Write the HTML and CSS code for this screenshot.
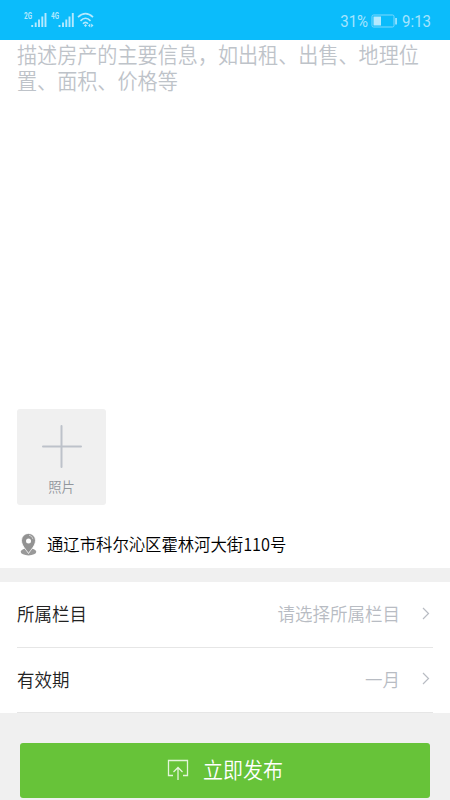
FILE: index.html
```
<!DOCTYPE html>
<html lang="zh-CN">
<head>
<meta charset="utf-8">
<title>发布</title>
<link rel="stylesheet" href="styles.css">
</head>
<body>
<header class="status">
  <svg class="signals" width="80" height="20" viewBox="0 0 80 20">
    <g class="net"><text x="0" y="10" textLength="8" lengthAdjust="spacingAndGlyphs">2G</text><text x="27" y="10" textLength="8" lengthAdjust="spacingAndGlyphs">4G</text></g>
    <path class="bars" d="M8.200 16v2M11.700 13.500v4.500M15 10.500v7.500M18.300 7.500v10.500M21.500 4v14M35.500 16v2M39 13.500v4.500M42.300 10.500v7.500M45.500 7.500v10.500M48.800 4v14"/>
    <path class="wifi" d="M54 8.200Q61.500 1.200 69 8.200M56.500 11.800Q61.500 6.700 66.500 11.800M59 14.800Q61.500 12 64 14.800"/>
    <path class="wifi-dots" d="M60 16.500l1.500-1.500 1.500 1.500-1.500 1.500zM64 16.500l2.300-2v4zM69.500 16.500l-2.300-2v4z"/>
  </svg>
  <div class="status-right">
    <span class="status-text">31%</span>
    <svg class="battery" width="27" height="14" viewBox="0 0 27 14">
      <rect class="battery-shell" x="1" y="1" width="22" height="12" rx="1.500"/>
      <path class="battery-fill" d="M2.500 2.500h7.500v9h-7.500zM24.300 4h1.500v6.500h-1.500z"/>
    </svg>
    <span class="status-text">9:13</span>
  </div>
</header>
<main>
  <section class="editor">
    <div class="placeholder"><div class="tall">描述房产的主要信息，如出租、出售、地理位</div><div class="tall">置、面积、价格等</div></div>
    <div class="photo">
      <svg width="40" height="43" viewBox="0 0 40 43"><path d="M19.500 1v41M1 21.500h38"/></svg>
      <span class="tall">照片</span>
    </div>
    <div class="location">
      <svg width="17" height="23" viewBox="0 0 17 23">
        <ellipse class="pin-base" cx="8.500" cy="18.800" rx="7.800" ry="3.600"/>
        <path class="pin-halo" d="M8.500 20.500C6 16.500 1.500 12.500 1.500 7.400a7 7 0 0 1 14 0c0 5.100-4.500 9.100-7 13.100z"/>
        <path class="pin-shine" d="M9 2.200q3.400.6 4 4"/>
        <circle class="pin-hole" cx="8.500" cy="8" r="2.500"/>
      </svg>
      <span class="tall">通辽市科尔沁区霍林河大街110号</span>
    </div>
  </section>
  <section class="options">
    <div class="row"><span class="tall">所属栏目</span><span class="value tall">请选择所属栏目</span><svg class="chevron" width="8" height="13" viewBox="0 0 8 13"><path d="M1 1l5.500 5.500L1 12"/></svg></div>
    <div class="row"><span class="tall">有效期</span><span class="value tall">一月</span><svg class="chevron" width="8" height="13" viewBox="0 0 8 13"><path d="M1 1l5.500 5.500L1 12"/></svg></div>
  </section>
  <div class="submit">
    <svg width="22" height="22" viewBox="0 0 22 22"><path d="M6 16.500H1.500V1.500h19v15H16M11 21V9M6.500 13L11 8.500l4.500 4.500"/></svg>
    <span class="tall">立即发布</span>
  </div>
</main>
</body>
</html>
```
FILE: styles.css
```
* { box-sizing: border-box; }
body {
  margin: 0;
  height: 800px;
  overflow: hidden;
  background: #f0f0f0;
  font-family: "Noto Sans CJK SC", sans-serif;
  font-weight: 350;
}
svg { display: block; flex: none; fill: none; }
.status {
  height: 40px;
  padding: 0 19px 0 24px;
  display: flex;
  justify-content: space-between;
  background: #0bbcfb;
  color: #a5e4fe;
}
.signals { margin-top: 9px; }
.net { fill: #b5e9fe; font: bold 9.500px Roboto, sans-serif; }
.bars { stroke: #b5e9fe; stroke-width: 1.900; }
.wifi { stroke: #b5e9fe; stroke-width: 1.700; }
.wifi-dots { fill: #b5e9fe; }
.status-right { display: flex; align-items: center; height: 41px; }
.status-text {
  font: 15px/20px Roboto, sans-serif;
  transform: scaleY(1.1);
}
.battery { margin: 0 4px 0 3px; }
.battery-shell { stroke: #7ed8fc; stroke-width: 1; }
.battery-fill { fill: #b5e9fe; }
.tall { white-space: nowrap; transform: scaleY(1.06); }
.editor { height: 528px; padding: 0 17px; background: #fff; }
.placeholder {
  height: 369px;
  padding-top: 2px;
  font-size: 20.100px;
  line-height: 26px;
  color: #bec3c9;
}
.photo {
  width: 89px;
  height: 96px;
  padding-top: 16px;
  border-radius: 3px;
  background: #f0f0f0;
  display: flex;
  flex-direction: column;
  align-items: center;
  color: #92969c;
  font-size: 13.300px;
  line-height: 20px;
}
.photo path { stroke: #bdc2ca; stroke-width: 2; stroke-linecap: round; }
.photo span { margin-top: 9px; }
.location {
  height: 23px;
  margin-top: 28px;
  padding-left: 3px;
  display: flex;
  align-items: center;
  gap: 10px;
  font-size: 16.350px;
  line-height: 25px;
  color: #000;
}
.pin-base { fill: #999; }
.pin-halo { fill: #929292; stroke: #fff; stroke-width: .8; }
.pin-shine { stroke: #ddd; stroke-width: .8; }
.pin-hole { fill: #fff; }
.options { height: 131px; margin-top: 14px; padding: 0 17px; background: #fff; }
.row {
  height: 65.500px;
  padding-right: 3px;
  display: flex;
  align-items: center;
  border-bottom: 1px solid #e6e6e6;
  color: #222;
  font-size: 17.500px;
  line-height: 26px;
}
.value { margin-left: auto; margin-right: 22px; color: #b8bcc3; }
.chevron { margin-bottom: 2px; }
.chevron path { stroke: #b8bcc3; stroke-width: 1.200; }
.submit {
  height: 55px;
  margin: 30px 20px 0;
  padding-bottom: 1px;
  border-radius: 3px;
  background: #67c339;
  display: flex;
  align-items: center;
  justify-content: center;
  gap: 14px;
  color: #fff;
  font-size: 20px;
  line-height: 28px;
}
.submit path { stroke: #e3f5da; stroke-width: 1.300; }
```
